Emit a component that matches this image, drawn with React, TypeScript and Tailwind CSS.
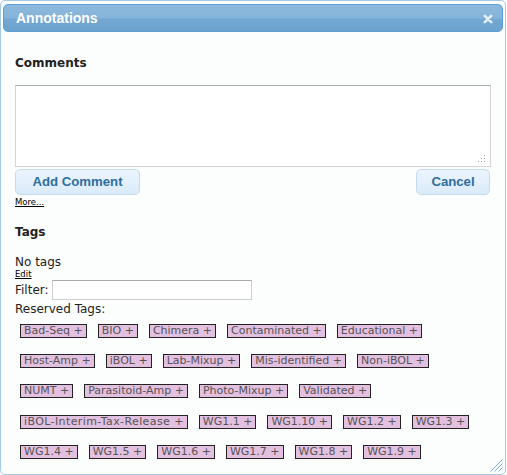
import React from "react";

const rows: string[][] = [
  ["Bad-Seq", "BIO", "Chimera", "Contaminated", "Educational"],
  ["Host-Amp", "iBOL", "Lab-Mixup", "Mis-identified", "Non-iBOL"],
  ["NUMT", "Parasitoid-Amp", "Photo-Mixup", "Validated"],
  ["iBOL-Interim-Tax-Release", "WG1.1", "WG1.10", "WG1.2", "WG1.3"],
  ["WG1.4", "WG1.5", "WG1.6", "WG1.7", "WG1.8", "WG1.9"],
];

const rowMargins = ["mt-0", "mt-[16px]", "mt-[16px]", "mt-[17px]", "mt-[16px]"];

function Tag({ label }: { label: string }) {
  const wide = label === "iBOL-Interim-Tax-Release";
  return (
    <span
      className={
        wide
          ? "inline-block border border-[#222] bg-[#e3c0e0] px-[3px] text-[11px] leading-[12px] text-[#555] whitespace-nowrap tracking-[0.4px]"
          : "inline-block border border-[#222] bg-[#e3c0e0] px-[3px] text-[11px] leading-[12px] text-[#555] whitespace-nowrap"
      }
    >
      {label} +
    </span>
  );
}

export default function App() {
  return (
    <div
      className="relative w-[506px] h-[475px] rounded-[5px] border border-[#a6c9e2] bg-[#fcfdfd] pt-[3px] px-[2px] text-[#222]"
      style={{ fontFamily: '"DejaVu Sans", Verdana, sans-serif' }}
    >
      {/* Title bar */}
      <div className="flex h-[28px] items-center justify-between rounded-[5px] border border-[#5d9fd3] pl-[12px] pr-[9px] bg-[linear-gradient(180deg,#8cb9dd_0%,#86b4da_48%,#72a7d2_56%,#6ba2cf_100%)]">
        <span
          className="text-[14px] font-bold text-white leading-[16px]"
          style={{ fontFamily: '"Liberation Sans", Arial, sans-serif' }}
        >
          Annotations
        </span>
        <svg width="10" height="10" viewBox="0 0 10 10" className="mt-[1px]">
          <path d="M1.8 1.8 L8.2 8.2 M8.2 1.8 L1.8 8.2" stroke="#e6eff8" strokeWidth="2.6" strokeLinecap="round" />
        </svg>
      </div>

      {/* Content */}
      <div className="px-[12px] pt-[24px]">
        <div className="text-[12px] font-bold leading-[14px]">Comments</div>

        <div className="relative mt-[15px] h-[82px] border border-[#d4d4d4] border-t-[#a9a9a9] bg-white">
          <svg width="9" height="9" viewBox="0 0 9 9" className="absolute right-[4px] bottom-[3px]">
            <g fill="#a0a0a0">
              <rect x="7" y="1" width="1" height="1" />
              <rect x="4" y="4" width="1" height="1" />
              <rect x="7" y="4" width="1" height="1" />
              <rect x="1" y="7" width="1" height="1" />
              <rect x="4" y="7" width="1" height="1" />
              <rect x="7" y="7" width="1" height="1" />
            </g>
          </svg>
        </div>

        <div className="mt-[2px] flex justify-between pr-[1px]">
          <button
            className="flex h-[26px] w-[125px] items-center justify-center rounded-[5px] border border-[#c5dbec] bg-[linear-gradient(180deg,#ebf4fd_0%,#e2effb_60%,#d9eaf8_100%)] text-[13.2px] font-bold text-[#2e6e9e]"
            style={{ fontFamily: '"Liberation Sans", Arial, sans-serif' }}
          >
            Add Comment
          </button>
          <button
            className="flex h-[26px] w-[74px] items-center justify-center rounded-[5px] border border-[#c5dbec] bg-[linear-gradient(180deg,#ebf4fd_0%,#e2effb_60%,#d9eaf8_100%)] text-[13.2px] font-bold text-[#2e6e9e]"
            style={{ fontFamily: '"Liberation Sans", Arial, sans-serif' }}
          >
            Cancel
          </button>
        </div>

        <div className="mt-[2px] text-[8.5px] leading-[10px] underline text-black">More...</div>

        <div className="mt-[18px] text-[12px] font-bold leading-[14px]">Tags</div>

        <div className="mt-[16px] text-[12px] leading-[14px]">No tags</div>
        <div className="text-[8.5px] leading-[10px] underline text-black">Edit</div>

        <div className="mt-[1px] flex h-[20px] items-center gap-[3px] text-[12px] leading-[14px]">
          <span>Filter:</span>
          <div className="h-[20px] w-[200px] border border-[#cfcfcf] border-t-[#a9a9a9] bg-white" />
        </div>

        <div className="mt-[2px] text-[12px] leading-[14px]">Reserved Tags:</div>

        <div className="mt-[8px] flex flex-col pl-[5px]">
          {rows.map((row, i) => (
            <div key={i} className={`flex gap-x-[11px] ${rowMargins[i]}`}>
              {row.map((t) => (
                <Tag key={t} label={t} />
              ))}
            </div>
          ))}
        </div>
      </div>

      {/* resize handle */}
      <svg width="13" height="13" viewBox="0 0 13 13" className="absolute right-[2px] bottom-[2px]">
        <g stroke="#77acd6" strokeWidth="1">
          <line x1="12.5" y1="0.5" x2="0.5" y2="12.5" />
          <line x1="12.5" y1="4.5" x2="4.5" y2="12.5" />
          <line x1="12.5" y1="8.5" x2="8.5" y2="12.5" />
        </g>
      </svg>
    </div>
  );
}
